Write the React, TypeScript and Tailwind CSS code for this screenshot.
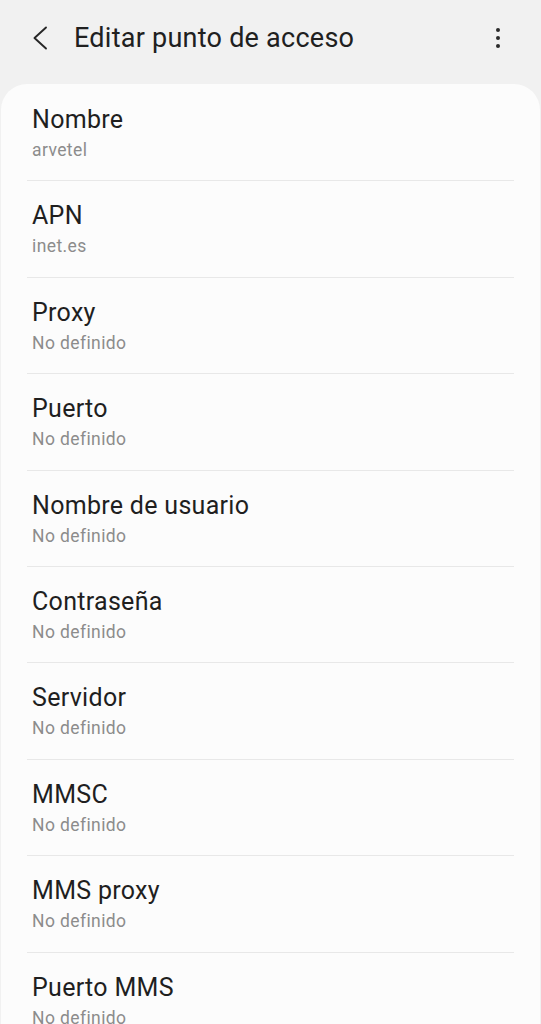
const fields: { label: string; value: string }[] = [
  { label: 'Nombre', value: 'arvetel' },
  { label: 'APN', value: 'inet.es' },
  { label: 'Proxy', value: 'No definido' },
  { label: 'Puerto', value: 'No definido' },
  { label: 'Nombre de usuario', value: 'No definido' },
  { label: 'Contraseña', value: 'No definido' },
  { label: 'Servidor', value: 'No definido' },
  { label: 'MMSC', value: 'No definido' },
  { label: 'MMS proxy', value: 'No definido' },
  { label: 'Puerto MMS', value: 'No definido' },
];

export default function App() {
  return (
    <div
      className="h-[1024px] w-full overflow-hidden bg-[#f1f1f1]"
      style={{ fontFamily: 'Roboto, "Noto Sans", sans-serif' }}
    >
      <header className="flex h-[84px] items-start pl-[32px] pr-[33px] pt-[19px]">
        <button type="button" className="flex h-[38px] w-[18px] items-center text-[#262626]" aria-label="Atrás">
          <svg width="16" height="24" viewBox="0 0 16 24" fill="none" stroke="currentColor" strokeWidth="1.9" strokeLinecap="round" strokeLinejoin="round">
            <polyline points="14,1.5 2.5,12 14,22.5" />
          </svg>
        </button>
        <h1 className="ml-[24px] flex-1 text-[27px] leading-[38px] tracking-[0.25px] text-[#202020]">Editar punto de acceso</h1>
        <button type="button" className="flex h-[38px] w-[20px] flex-col items-center justify-center gap-[4px]" aria-label="Más opciones">
          <span className="h-[4px] w-[4px] rounded-full bg-[#2a2a2a]" />
          <span className="h-[4px] w-[4px] rounded-full bg-[#2a2a2a]" />
          <span className="h-[4px] w-[4px] rounded-full bg-[#2a2a2a]" />
        </button>
      </header>

      <main className="mx-[1px] rounded-[26px] bg-[#fcfcfc] pt-[1px]">
        {fields.map((field, i) => (
          <div key={field.label}>
            {i > 0 && <div className="mx-[26px] h-px bg-[#e8e8e8]" />}
            <div className="px-[31px] pb-[19.4px] pt-[20px]">
              <p className="text-[25px] leading-[30px] tracking-[0.3px] text-[#1f1f1f]">{field.label}</p>
              <p className="mt-[4px] text-[17.5px] leading-[22px] tracking-[0.4px] text-[#8c8c8c]">{field.value}</p>
            </div>
          </div>
        ))}
      </main>
    </div>
  );
}
